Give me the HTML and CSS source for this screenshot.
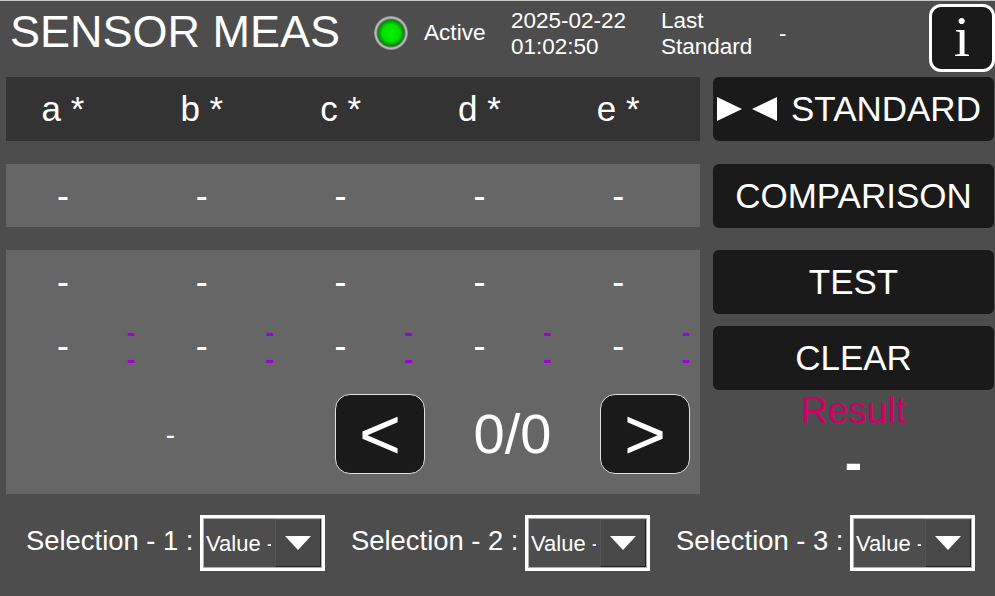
FILE: index.html
```html
<!DOCTYPE html>
<html lang="en">

<head>
     <meta charset="UTF-8">
     <meta name="viewport" content="width=device-width, initial-scale=1.0">
     <title>Sensor Meas</title>
     <link rel="stylesheet" href="styles.css">
</head>

<body>
     <header class="topbar">
          <h1 class="title">SENSOR MEAS</h1>
          <span class="led"></span>
          <span class="status">Active</span>
          <div class="datetime">2025-02-22<br>01:02:50</div>
          <div class="last-label">Last<br>Standard</div>
          <span class="last-value">-</span>
          <button class="info-btn">i</button>
     </header>

     <main class="content">
          <section class="panels">
               <div class="panel panel-head cols">
                    <div class="col"><span class="val">a *</span></div>
                    <div class="col"><span class="val">b *</span></div>
                    <div class="col"><span class="val">c *</span></div>
                    <div class="col"><span class="val">d *</span></div>
                    <div class="col"><span class="val">e *</span></div>
               </div>

               <div class="panel panel-standard cols">
                    <div class="col"><span class="val">-</span></div>
                    <div class="col"><span class="val">-</span></div>
                    <div class="col"><span class="val">-</span></div>
                    <div class="col"><span class="val">-</span></div>
                    <div class="col"><span class="val">-</span></div>
               </div>

               <div class="panel panel-test">
                    <div class="cols test-row">
                         <div class="col"><span class="val">-</span></div>
                         <div class="col"><span class="val">-</span></div>
                         <div class="col"><span class="val">-</span></div>
                         <div class="col"><span class="val">-</span></div>
                         <div class="col"><span class="val">-</span></div>
                    </div>
                    <div class="cols test-row">
                         <div class="col"><span class="val">-</span><span class="delta">-<br>-</span></div>
                         <div class="col"><span class="val">-</span><span class="delta">-<br>-</span></div>
                         <div class="col"><span class="val">-</span><span class="delta">-<br>-</span></div>
                         <div class="col"><span class="val">-</span><span class="delta">-<br>-</span></div>
                         <div class="col"><span class="val">-</span><span class="delta">-<br>-</span></div>
                    </div>
                    <div class="pager">
                         <span class="pager-note">-</span>
                         <button class="page-btn">&lt;</button>
                         <span class="page-count">0/0</span>
                         <button class="page-btn">&gt;</button>
                    </div>
               </div>
          </section>

          <aside class="actions">
               <button class="action action-standard">
                    <svg class="std-icon" width="60" height="24" viewBox="0 0 60 24">
                         <path d="M0 0L25 12L0 24Z" fill="#fff" />
                         <path d="M60 0L35 12L60 24Z" fill="#fff" />
                    </svg>
                    STANDARD
               </button>
               <button class="action action-comparison">COMPARISON</button>
               <button class="action action-test">TEST</button>
               <button class="action action-clear">CLEAR</button>
               <div class="result-label">Result</div>
               <div class="result-value">-</div>
          </aside>
     </main>

     <footer class="selectors">
          <div class="selector">
               <span class="selector-label">Selection - 1 :</span>
               <div class="combo">
                    <span class="combo-text">Value - 1</span>
                    <span class="combo-arrow"></span>
               </div>
          </div>
          <div class="selector">
               <span class="selector-label">Selection - 2 :</span>
               <div class="combo">
                    <span class="combo-text">Value - 1</span>
                    <span class="combo-arrow"></span>
               </div>
          </div>
          <div class="selector">
               <span class="selector-label">Selection - 3 :</span>
               <div class="combo">
                    <span class="combo-text">Value - 1</span>
                    <span class="combo-arrow"></span>
               </div>
          </div>
     </footer>
</body>

</html>
```

FILE: styles.css
```css
/* Base styles */
html,
body {
     height: 100%;
}

body {
     margin: 0;
     background-color: #4d4d4d;
     border-top: 1px solid #c8c8c8;
     box-sizing: border-box;
     color: #ffffff;
     font-family: "Liberation Sans", Arial, sans-serif;
     overflow: hidden;
}

button {
     font-family: inherit;
     color: #ffffff;
     padding: 0;
     cursor: pointer;
}

/* Top bar */
.topbar {
     display: flex;
     align-items: center;
     height: 76px;
     padding-left: 10px;
}

.title {
     margin: 0 0 14px;
     width: 364px;
     font-size: 45px;
     font-weight: normal;
     line-height: 62px;
}

.led {
     width: 34px;
     height: 34px;
     flex: none;
     border-radius: 50%;
     background: radial-gradient(circle closest-side, #00f400 0%, #00e000 50%, #008c00 76%, #6a6a6a 81%, #c8c8c8 90%, #7a7a7a 100%);
     margin-bottom: 12px;
}

.status {
     margin: 0 0 12px 16px;
     width: 87px;
     font-size: 22.6px;
}

.datetime,
.last-label {
     font-size: 22.5px;
     line-height: 26px;
     margin-bottom: 10px;
}

.datetime {
     width: 150px;
}

.last-label {
     width: 118px;
}

.last-value {
     font-size: 22px;
     margin-bottom: 10px;
     width: 150px;
}

.info-btn {
     width: 66px;
     height: 68px;
     margin-bottom: 2px;
     padding-bottom: 5px;
     box-sizing: border-box;
     flex: none;
     background: #1a1a1a;
     border: 3px solid #ffffff;
     border-radius: 12px;
     font-family: "Liberation Serif", serif;
     font-size: 58px;
     line-height: 60px;
}

/* Main area */
.content {
     display: flex;
     height: 417px;
     padding-left: 6px;
     gap: 13px;
}

.panels {
     width: 694px;
     display: flex;
     flex-direction: column;
     gap: 23px;
}

.panel-head {
     height: 64px;
     background: #333333;
     font-size: 35px;
}

.panel-standard {
     height: 63px;
     background: #666666;
     font-size: 36px;
}

.panel-test {
     height: 244px;
     background: #666666;
     font-size: 36px;
}

.cols {
     display: grid;
     grid-template-columns: repeat(5, 1fr);
     align-items: center;
}

.col {
     display: flex;
     align-items: center;
}

.val {
     width: 114px;
     text-align: center;
}

.delta {
     width: 22px;
     text-align: center;
     font-size: 26px;
     font-weight: bold;
     line-height: 27px;
     color: #a000d8;
}

.test-row {
     height: 64px;
}

.pager {
     display: flex;
     align-items: center;
     height: 80px;
     margin-top: 16px;
}

.pager-note {
     width: 329px;
     margin-top: 1px;
     text-align: center;
     font-size: 28px;
}

.page-btn {
     width: 90px;
     height: 80px;
     background: #1a1a1a;
     border: 1px solid #e0e0e0;
     border-radius: 15px;
     font-size: 72px;
     line-height: 70px;
}

.page-count {
     width: 175px;
     text-align: center;
     font-size: 56px;
     margin-bottom: 2px;
}

/* Right column */
.actions {
     width: 281px;
     display: flex;
     flex-direction: column;
     align-items: center;
}

.action {
     width: 100%;
     height: 64px;
     flex: none;
     background: #1a1a1a;
     border: none;
     border-radius: 6px;
     font-size: 35px;
}

.action-standard {
     display: flex;
     align-items: center;
     gap: 14px;
     padding-left: 4px;
}

.action-comparison {
     margin-top: 23px;
}

.action-test {
     margin-top: 22px;
}

.action-clear {
     margin-top: 12px;
}

.result-label {
     font-size: 37px;
     line-height: 42px;
     color: #cc0066;
}

.result-value {
     font-size: 52px;
     font-weight: bold;
     line-height: 60px;
}

/* Bottom selectors */
.selectors {
     display: flex;
     padding: 21px 0 0 26px;
}

.selector {
     width: 325px;
     flex: none;
     display: flex;
     align-items: center;
}

.selector-label {
     width: 174px;
     flex: none;
     font-size: 27.4px;
     margin-bottom: 4px;
}

.combo {
     width: 125px;
     height: 56px;
     flex: none;
     box-sizing: border-box;
     display: flex;
     background: #4d4d4d;
     border: 3px solid #ffffff;
     outline: 1px solid #b0b0b0;
     outline-offset: -4px;
     padding: 1px;
}

.combo-text {
     width: 67px;
     margin-right: 4px;
     padding-left: 2px;
     box-sizing: border-box;
     overflow: hidden;
     white-space: nowrap;
     font-size: 22px;
     line-height: 50px;
}

.combo-arrow {
     flex: 1;
     box-sizing: border-box;
     display: flex;
     align-items: center;
     justify-content: center;
     background: #484848;
     border: 1px solid;
     border-color: #555555 #222222 #222222 #555555;
}

.combo-arrow::after {
     content: "";
     border-left: 13px solid transparent;
     border-right: 13px solid transparent;
     border-top: 14px solid #ffffff;
}
```
